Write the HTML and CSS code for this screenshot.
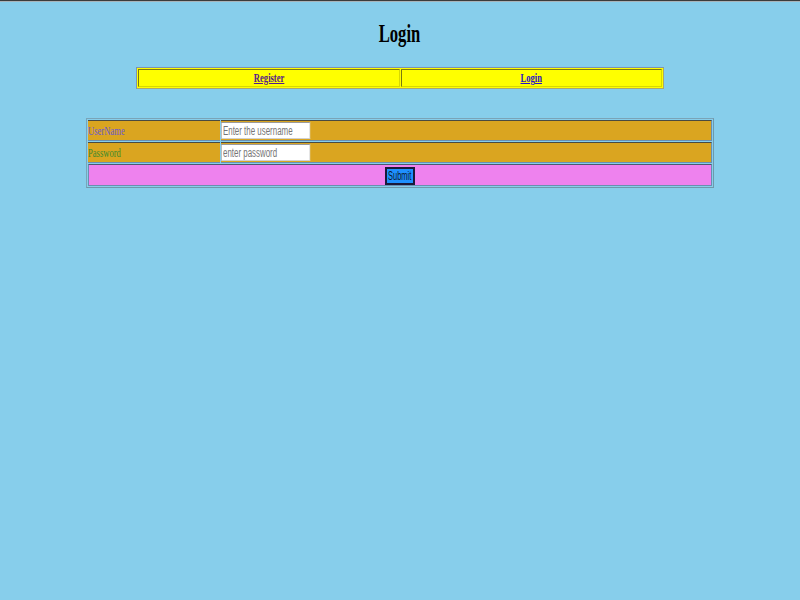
FILE: index.html
```html
<!DOCTYPE html>
<html>
<head>
<meta charset="utf-8">
<title>Login</title>
<link rel="stylesheet" href="styles.css">
</head>
<body>
<div class="topline"></div>
<h1 class="title"><span class="squeeze">Login</span></h1>
<table class="nav">
  <tr>
    <td class="nav-cell"><a class="nav-link visited" href="#"><span class="squeeze link-text">Register</span></a></td>
    <td class="nav-cell"><a class="nav-link" href="#"><span class="squeeze link-text">Login</span></a></td>
  </tr>
</table>
<form class="login-form">
<table class="form-table">
  <tr class="row-field">
    <td class="label-cell"><span class="squeeze-left label-user">UserName</span></td>
    <td class="input-cell"><input class="field" type="text" placeholder="Enter the username"></td>
  </tr>
  <tr class="row-field">
    <td class="label-cell"><span class="squeeze-left label-pass">Password</span></td>
    <td class="input-cell"><input class="field" type="password" placeholder="enter password"></td>
  </tr>
  <tr class="row-submit">
    <td class="submit-cell" colspan="2"><button class="submit" type="button"><span class="squeeze submit-text">Submit</span></button></td>
  </tr>
</table>
</form>
</body>
</html>
```

FILE: styles.css
```css
html, body {
  margin: 0;
  padding: 0;
}
body {
  background: #87ceeb;
  font-family: "Liberation Serif", serif;
  min-height: 600px;
}
.topline {
  height: 1px;
  background: #3c3c3c;
  border-bottom: 1px solid #a8b4ba;
}
.title {
  margin: 16px 0 0;
  height: 32px;
  text-align: center;
  font-size: 26px;
  font-weight: bold;
  line-height: 32px;
  color: #000;
}
.squeeze {
  display: inline-block;
  transform: scaleX(0.64);
  transform-origin: center;
}
.squeeze-left {
  display: inline-block;
  transform: scaleX(0.66);
  transform-origin: left center;
}
.nav {
  width: 528px;
  height: 22px;
  margin: 17px auto 0;
  background: #ffff00;
  table-layout: fixed;
  border-collapse: separate;
  border-spacing: 1px;
  border: 1px solid;
  border-color: #7d92b0 #a8a870 #a8a870 #7d92b0;
}
.nav-cell {
  width: 50%;
  padding: 0;
  text-align: center;
  border: 1px solid;
  border-color: #7a7a10 #d8d800 #d8d800 #7a7a10;
  font-size: 13px;
  font-weight: bold;
  height: 16px;
}
.nav-link {
  color: #2b12c8;
}
.nav-link.visited {
  color: #551a8b;
}
.link-text {
  text-decoration: underline;
  transform: scaleX(0.66);
}
.login-form {
  margin: 29px 0 0;
}
.form-table {
  width: 628px;
  margin: 0 auto;
  border-collapse: separate;
  border-spacing: 1px;
  border: 1px solid;
  border-color: #7aa4b8 #6f98ab #6f98ab #7aa4b8;
}
.row-field td {
  background: #daa520;
  height: 19px;
  border-top: 1px solid #4a4a40;
  border-bottom: 1px solid #6a8fb0;
  padding: 0;
}
.label-cell {
  width: 132px;
  font-size: 13px;
}
.input-cell {
  border-right: 1px solid #6a8fb0;
}
.label-user {
  color: #6a5acd;
}
.label-pass {
  color: #3b8a2e;
}
.field {
  display: block;
  width: 135px;
  height: 17px;
  box-sizing: border-box;
  margin: 0;
  padding: 0 2px;
  border: 1px solid;
  border-color: #9a9a9a #d0d0d0 #d0d0d0 #9a9a9a;
  background: #fff;
  font-family: "Liberation Sans", sans-serif;
  font-size: 12px;
  transform: scaleX(0.66);
  transform-origin: left center;
}
.field::placeholder {
  color: #757575;
}
.row-submit td {
  background: #ee82ee;
  height: 20px;
  padding: 0;
  border: 1px solid;
  border-color: #4a5a70 #6a8fb0 #6a8fb0 #6a8fb0;
}
.submit-cell {
  text-align: center;
}
.submit {
  display: inline-flex;
  justify-content: center;
  align-items: center;
  width: 30px;
  height: 18px;
  padding: 0;
  margin: 1px 0 0;
  background: #1e90ff;
  border: 2px solid #1a1a3a;
  font-family: "Liberation Sans", sans-serif;
  font-size: 12px;
  color: #0a1a30;
  vertical-align: middle;
  overflow: visible;
  white-space: nowrap;
}
.submit-text {
  flex-shrink: 0;
  transform: scaleX(0.62);
}
```
